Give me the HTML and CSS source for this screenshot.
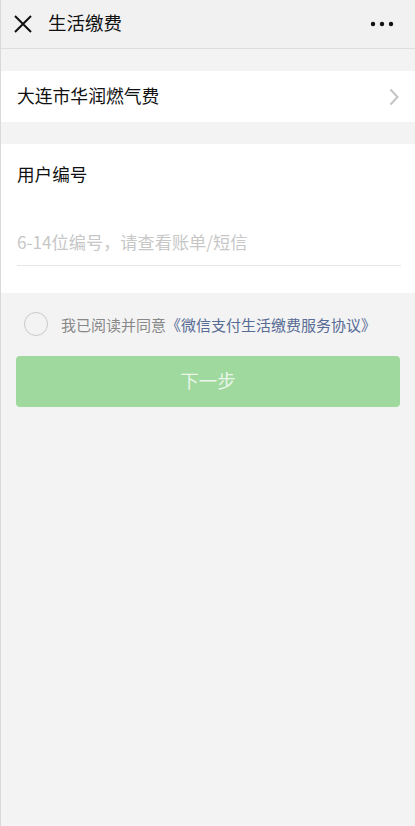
FILE: index.html
```html
<!DOCTYPE html>
<html>
  <head>
    <meta charset="UTF-8" />
    <meta name="viewport" content="width=device-width, initial-scale=1.0" />
    <title>生活缴费</title>
    <link rel="stylesheet" href="styles.css">
  </head>
  <body>
    <div class="topbar">
      <svg class="close" width="20" height="20" viewBox="0 0 20 20">
        <path d="M2 2 L18 18 M18 2 L2 18" stroke="#111" stroke-width="2" fill="none" />
      </svg>
      <span class="title">生活缴费</span>
      <svg class="more" width="24" height="6" viewBox="0 0 24 6">
        <circle cx="3" cy="3" r="2.2" fill="#111" />
        <circle cx="12" cy="3" r="2.2" fill="#111" />
        <circle cx="21" cy="3" r="2.2" fill="#111" />
      </svg>
    </div>

    <div class="cell company">
      <span>大连市华润燃气费</span>
      <svg class="arrow" width="10" height="18" viewBox="0 0 10 18">
        <path d="M1.5 1.5 L8.5 9 L1.5 16.5" stroke="#c4c4c4" stroke-width="2" fill="none" />
      </svg>
    </div>

    <form class="panel">
      <div class="label">用户编号</div>
      <input class="account" placeholder="6-14位编号，请查看账单/短信" />
    </form>

    <div class="agree">
      <span class="radio"></span>
      <span>我已阅读并同意<a href="#">《微信支付生活缴费服务协议》</a></span>
    </div>

    <button class="next" type="button">下一步</button>
  </body>
</html>
```

FILE: styles.css
```css
body {
  margin: 0;
  min-height: 826px;
  background: #f3f3f3;
  border-left: 1px solid #d9d9d9;
  font-family: "Noto Sans CJK SC", "Noto Sans", sans-serif;
  color: #111;
}

.topbar {
  display: flex;
  align-items: center;
  height: 48px;
  padding: 0 21px 0 12px;
  background: #f1f1f1;
  border-bottom: 1px solid #dedede;
}
.close {
  margin-right: 15px;
}
.title {
  flex-grow: 1;
  font-size: 18.5px;
  margin-bottom: 4px;
}

.cell {
  display: flex;
  align-items: center;
  justify-content: space-between;
  background: #fff;
}
.company {
  box-sizing: border-box;
  margin-top: 22px;
  height: 51px;
  padding: 0 16px 4px 16px;
  font-size: 17.8px;
}
.arrow {
  margin-top: 4px;
}

.panel {
  margin-top: 22px;
  background: #fff;
  padding: 16px 14px 27px 16px;
}
.label {
  font-size: 17.6px;
  line-height: 28px;
}
.account {
  display: block;
  width: 100%;
  box-sizing: border-box;
  margin-top: 38px;
  height: 40px;
  padding: 0 0 8px 0;
  border: none;
  border-bottom: 1px solid #e6e6e6;
  font-family: inherit;
  font-size: 17.2px;
  color: #111;
}
.account::placeholder {
  color: #c7c7c7;
}
.account:focus {
  outline: none;
}

.agree {
  display: flex;
  align-items: center;
  margin: 19px 0 0 23px;
  font-size: 15px;
  color: #888;
}
.radio {
  width: 22px;
  height: 22px;
  border: 1px solid #c9c9c9;
  border-radius: 50%;
  margin-right: 13px;
}
.agree a {
  color: #576b95;
  text-decoration: none;
}

.next {
  display: block;
  width: 384px;
  height: 51px;
  margin: 20px 0 0 15px;
  padding: 0 0 4px 0;
  border: none;
  border-radius: 4px;
  background: #9fd99e;
  color: #e9f6e9;
  font-family: inherit;
  font-size: 18.5px;
}
```
